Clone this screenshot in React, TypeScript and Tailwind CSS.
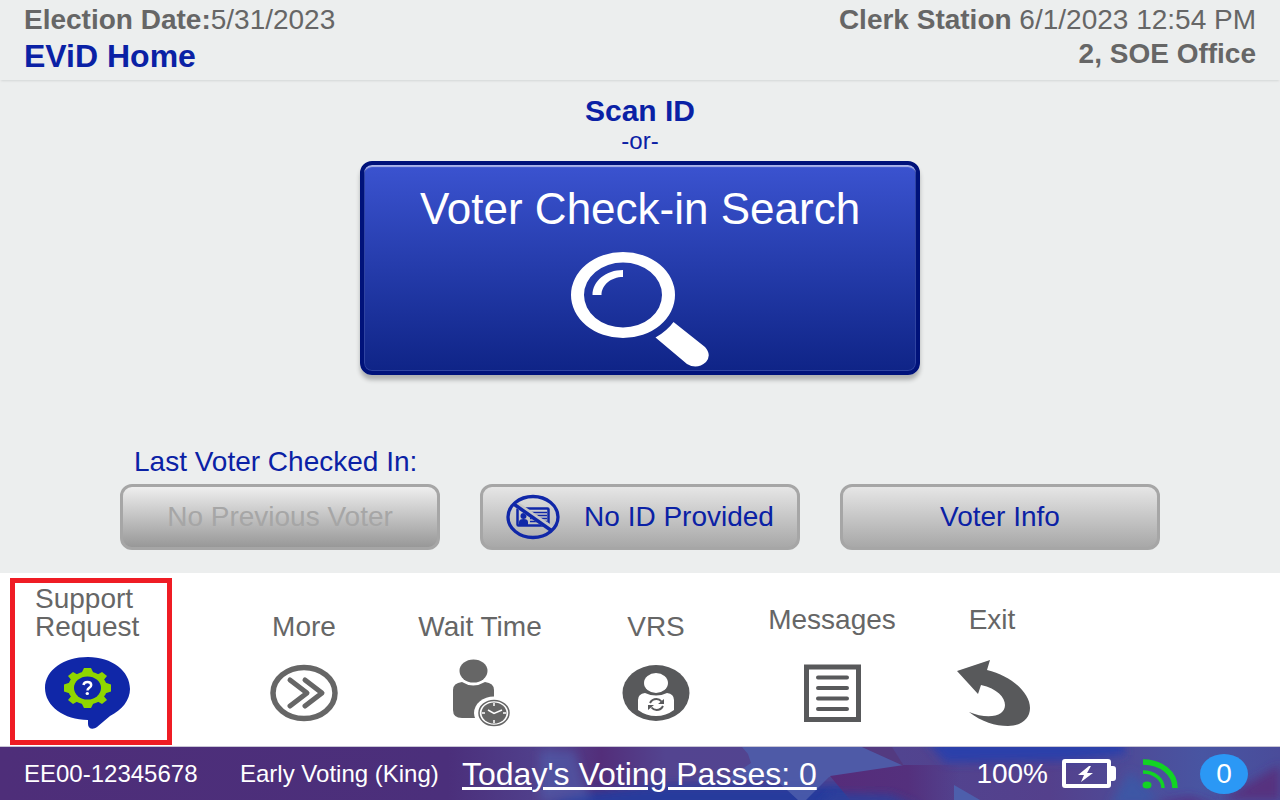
import type { FC, ReactNode } from "react";

const NoIdIcon: FC = () => (
  <svg width="54" height="46" viewBox="0 0 54 46" fill="none" aria-hidden="true">
    <rect x="11.5" y="14.500" width="31" height="17" rx="1" stroke="#1027a8" strokeWidth="2.500" />
    <path
      d="M24 18.500h17M24 21.500h17M24 24.500h17M24 27.500h17"
      stroke="#1027a8"
      strokeWidth="1.700"
    />
    <ellipse cx="17.500" cy="22" rx="3" ry="3" fill="#1027a8" />
    <path d="M13 31v-3q0-3 4.500-3t4.500 3v3z" fill="#1027a8" />
    <path d="M9 9.500 46 35" stroke="#c6c6c6" strokeWidth="6" />
    <path d="M7 9.500 46 37" stroke="#1027a8" strokeWidth="3.500" />
    <ellipse cx="27" cy="23" rx="25" ry="20.500" stroke="#1027a8" strokeWidth="3.300" />
  </svg>
);

const MagnifierIcon: FC = () => (
  <svg width="140" height="118" viewBox="0 0 140 118" fill="none" aria-hidden="true">
    <path
      d="M1 44a52 43 0 1 0 104 0a52 43 0 1 0-104 0M14 44a39 32.500 0 1 1 78 0a39 32.500 0 1 1-78 0"
      fill="#fff"
      fillRule="evenodd"
    />
    <path d="M22.500 44C22.500 30 36 19 53 19v7C41 26 31.500 34 31.500 44Z" fill="#fff" />
    <path
      d="M103.500 71 135 96Q142 104 136 111Q127 119 117 113L85.500 86.500Q97 80 103.500 71Z"
      fill="#fff"
    />
  </svg>
);

const SupportIcon: FC = () => (
  <svg width="86" height="74" viewBox="0 0 86 74" aria-hidden="true">
    <path
      d="M43 1c24 0 42 14 42 32 0 11-8 21-20 27L52 71c-4 3-9 2-9-3v-4C19 64 0 50 0 32S19 1 43 1Z"
      fill="#1027a8"
    />
    <g fill="#8fd600">
      <ellipse cx="42.500" cy="32" rx="19.500" ry="16.500" />
      <path d="M39 12h7l3 6H36zM36 46h13l-3 6h-7zM19 28.500l6-2v11l-6-2zM66 28.500l-6-2v11l6-2z" />
      <path d="m23 20 5-4 7 4-7 6zM62 20l-5-4-7 4 7 6zM23 44l5 4 7-4-7-6zM62 44l-5 4-7-4 7-6z" />
    </g>
    <ellipse cx="42.500" cy="32" rx="13.500" ry="11.500" fill="#1027a8" />
    <path
      d="M38.500 29q.5-3 4-3t3.700 3q0 1.700-2 2.800-1.700 1-1.700 2.700"
      fill="none"
      stroke="#fff"
      strokeWidth="2.500"
    />
    <ellipse cx="42.300" cy="37.500" rx="1.700" ry="1.500" fill="#fff" />
  </svg>
);

const MoreIcon: FC = () => (
  <svg width="68" height="58" viewBox="0 0 68 58" fill="none" stroke="#666" aria-hidden="true">
    <ellipse cx="34" cy="29" rx="31" ry="25.500" strokeWidth="5.500" />
    <path
      d="m20 16 17 13-17 13M35 16l17 13-17 13"
      strokeWidth="5"
      strokeLinecap="round"
      strokeLinejoin="round"
    />
  </svg>
);

const WaitTimeIcon: FC = () => (
  <svg width="60" height="68" viewBox="0 0 60 68" aria-hidden="true">
    <ellipse cx="23.500" cy="12" rx="14" ry="11.500" fill="#666" />
    <path
      d="M12 23q11 7 23 0 9 1 9 8v20q0 8-9 8H12q-9 0-9-8V31q0-7 9-8Z"
      fill="#666"
    />
    <ellipse cx="44" cy="54" rx="20" ry="16.500" fill="#fff" />
    <ellipse cx="44" cy="54" rx="15" ry="12.500" fill="#fff" stroke="#666" strokeWidth="1.500" />
    <ellipse cx="44" cy="54" rx="12.500" ry="10.500" fill="#666" />
    <path
      d="m38 51 6 3.500 8-3.500M44 44v3M44 61v3M32 54h3M53 54h3"
      fill="none"
      stroke="#fff"
      strokeWidth="1.500"
    />
  </svg>
);

const VrsIcon: FC = () => (
  <svg width="68" height="58" viewBox="0 0 68 58" aria-hidden="true">
    <ellipse cx="34" cy="29" rx="33.500" ry="28" fill="#58595b" />
    <ellipse cx="34" cy="19" rx="12" ry="10" fill="#fff" />
    <path d="M23 29q11 5 22 0 7 1 7 7v10q-8 6-18 6t-18-6V36q0-6 7-7Z" fill="#fff" />
    <g fill="none" stroke="#58595b" strokeWidth="2">
      <path d="M28 39q2-4 6.500-4 3 0 5 2.500" />
      <path d="M41 42q-2 4-6.500 4-3 0-5-2.500" />
    </g>
    <path d="M42 35v5h-6zM26 46v-5h6z" fill="#58595b" />
  </svg>
);

const MessagesIcon: FC = () => (
  <svg width="58" height="58" viewBox="0 0 58 58" fill="none" stroke="#58595b" aria-hidden="true">
    <rect x="3.500" y="3" width="52" height="52.500" strokeWidth="5" />
    <path
      d="M15 13.500h29M15 24h29M15 34.500h29M15 45h29"
      strokeWidth="4"
      strokeLinecap="round"
    />
  </svg>
);

const ExitIcon: FC = () => (
  <svg width="78" height="68" viewBox="0 0 78 68" aria-hidden="true">
    <path
      d="M4 12 37 1l-3 10c25 6 43 23 43 38 0 11-9 18-22 18-13 0-26-4-39-14 12 5 25 6 32 1 9-7 3-23-20-28l-3 9Z"
      fill="#58595b"
    />
  </svg>
);

const BatteryIcon: FC = () => (
  <svg width="54" height="30" viewBox="0 0 54 30" aria-label="Charging" role="img">
    <rect x="2" y="2" width="45" height="25" rx="1" fill="none" stroke="#fff" strokeWidth="4" />
    <path d="M48 7h3q3 0 3 3v9q0 3-3 3h-3zM27 7 16 16h6l-3 7 12-9h-6l4-7Z" fill="#fff" />
  </svg>
);

const SignalIcon: FC = () => (
  <svg width="36" height="30" viewBox="0 0 36 30" fill="none" aria-label="Connected" role="img">
    <ellipse cx="5" cy="26" rx="4.500" ry="3.500" fill="#12d424" />
    <path d="M1 13c11 0 20 7 20 16" stroke="#12d424" strokeWidth="3.500" />
    <path d="M1 3c18 0 32 11 32 26" stroke="#12d424" strokeWidth="5.500" />
  </svg>
);

const FooterBackdrop: FC = () => (
  <svg
    className="absolute inset-0 h-full w-full"
    viewBox="0 0 1280 53"
    preserveAspectRatio="none"
    aria-hidden="true"
  >
    <defs>
      <linearGradient id="base">
        <stop offset="0" stopColor="#4e2e79" />
        <stop offset="0.350" stopColor="#4b2f7b" />
        <stop offset="0.430" stopColor="#51428e" />
        <stop offset="0.470" stopColor="#532e7a" />
        <stop offset="0.520" stopColor="#534490" />
        <stop offset="0.700" stopColor="#514490" />
        <stop offset="0.820" stopColor="#54408c" />
        <stop offset="0.940" stopColor="#4855a2" />
        <stop offset="1" stopColor="#4a4c9a" />
      </linearGradient>
      <linearGradient id="crimson">
        <stop offset="0" stopColor="#562c7a" />
        <stop offset="0.600" stopColor="#54307d" />
        <stop offset="1" stopColor="#54307d" stopOpacity="0" />
      </linearGradient>
      <filter id="soft" x="-10%" y="-50%" width="120%" height="200%">
        <feGaussianBlur stdDeviation="5" />
      </filter>
    </defs>
    <rect width="1280" height="53" fill="url(#base)" />
    <g filter="url(#soft)">
      <path d="M540 62 580 46 660 38 860 38V62Z" fill="#263b9c" />
      <path d="M540 4 575 4 590 53H540Z" fill="#4f5dab" opacity=".6" />
      <path d="M925-8h200v16l-60 6-120 2Z" fill="#2a40aa" />
      <path d="M1110 58 1130 24 1165 58Z" fill="#3e57a5" />
      <path d="M1140 58l50-8 30 8Z" fill="#562a7e" />
      <path d="M1280 18v35h-60Z" fill="#56317f" />
    </g>
    <path d="M748 7 742 0H862l42 19-75 11-23 23h-8l-22-20-50 0 25-17Z" fill="#4d5eac" opacity=".85" />
    <path d="M862 0h30l12 19Z" fill="#56306f" opacity=".5" />
    <path d="M830 29 904 18h56v35H850Z" fill="url(#crimson)" />
    <path d="M818 60 832 46 890 48 920 60Z" fill="#2d3f9b" filter="url(#soft)" />
    <path d="M954 38 980 53h-26Z" fill="#4d5fac" />
  </svg>
);

type ActionButtonProps = {
  children: ReactNode;
  disabled?: boolean;
};

const ActionButton: FC<ActionButtonProps> = (props) => {
  return (
    <button
      type="button"
      disabled={props.disabled}
      className="flex h-[66px] w-full items-center justify-center gap-6 rounded-xl border-3 border-[#a6a6a6] bg-linear-to-b from-[#e6e6e6] to-[#a8a8a8] whitespace-nowrap text-[#0a21a5] disabled:from-[#efefef] disabled:to-[#989898] disabled:text-[#a6a6a6]"
    >
      {props.children}
    </button>
  );
};

type NavItemProps = {
  icon: ReactNode;
  label: string;
  className: string;
};

const NavItem: FC<NavItemProps> = (props) => {
  return (
    <button type="button" className={`flex flex-col items-center pb-3.5 ${props.className}`}>
      <span>{props.label}</span>
      <span className="mt-auto flex h-[76px] items-center justify-center">{props.icon}</span>
    </button>
  );
};

export default function App() {
  return (
    <div className="flex min-h-screen flex-col bg-[#eceeee] font-['Liberation_Sans',Arial,sans-serif] text-[28px] leading-7 text-[#666]">
      <header className="flex h-20 justify-between px-6 pt-1 shadow-[0_2px_2px_-1px_#d4d6d6]">
        <div>
          <p className="leading-8">
            <b>Election Date:</b>5/31/2023
          </p>
          <h1 className="text-[32px] leading-10 font-bold text-[#0a21a5]">EViD Home</h1>
        </div>
        <div className="text-right">
          <p className="leading-8">
            <b>Clerk Station</b> 6/1/2023 12:54 PM
          </p>
          <p className="leading-9 font-bold">2, SOE Office</p>
        </div>
      </header>

      <main className="flex grow flex-col items-center justify-between pt-[15px] pb-[23px] text-[#0a21a5]">
        <div className="flex flex-col items-center">
          <h2 className="text-[30px] leading-8 font-bold">Scan ID</h2>
          <p className="text-2xl leading-7">-or-</p>
          <button
            type="button"
            className="mt-1.5 flex h-[214px] w-[560px] flex-col items-center rounded-xl border-4 border-[#00127a] bg-linear-to-b from-[#3b53d0] to-[#0f2487] pt-5 text-[44px] leading-12 text-white shadow-[inset_0_3px_1px_-1px_#a9b3e8,inset_0_0_0_1px_#2f43a0,0_5px_4px_#b0b2b2]"
          >
            <span>Voter Check-in Search</span>
            <span className="mt-[18px]">
              <MagnifierIcon />
            </span>
          </button>
        </div>

        <div className="grid w-full grid-cols-3 items-end gap-10 px-30">
          <div>
            <p className="mb-2 pl-3.5 whitespace-nowrap">Last Voter Checked In:</p>
            <ActionButton disabled>No Previous Voter</ActionButton>
          </div>
          <ActionButton>
            <NoIdIcon />
            No ID Provided
          </ActionButton>
          <ActionButton>Voter Info</ActionButton>
        </div>
      </main>

      <nav className="flex bg-white pt-[5px] pb-px">
        <button
          type="button"
          className="mr-11 ml-2.5 flex h-[167px] w-[162px] flex-col items-start border-5 border-[#ef1c24] pt-0.5 pl-5 text-left"
        >
          <span>
            Support
            <br />
            Request
          </span>
          <span className="mt-[15px] ml-2.5">
            <SupportIcon />
          </span>
        </button>
        <NavItem className="w-44 pt-[35px]" label="More" icon={<MoreIcon />} />
        <NavItem className="w-44 pt-[35px]" label="Wait Time" icon={<WaitTimeIcon />} />
        <NavItem className="w-44 pt-[35px]" label="VRS" icon={<VrsIcon />} />
        <NavItem className="w-44 pt-7" label="Messages" icon={<MessagesIcon />} />
        <NavItem className="w-36 pt-7" label="Exit" icon={<ExitIcon />} />
      </nav>

      <footer className="relative border-t border-[#c9c6d6] text-white">
        <FooterBackdrop />
        <div className="relative flex h-[53px] items-center px-6 text-2xl whitespace-nowrap">
          <span className="w-54">EE00-12345678</span>
          <span className="w-[222px]">Early Voting (King)</span>
          <a href="#passes" className="text-[32px] leading-8 underline">
            Today's Voting Passes: 0
          </a>
          <div className="ml-auto flex items-center text-[28px]">
            <span className="mr-3.5">100%</span>
            <BatteryIcon />
            <span className="mr-5.5 ml-6.5">
              <SignalIcon />
            </span>
            <span className="mr-2 flex h-10 w-12 items-center justify-center rounded-[50%] bg-[#2b98f5]">
              0
            </span>
          </div>
        </div>
      </footer>
    </div>
  );
}
